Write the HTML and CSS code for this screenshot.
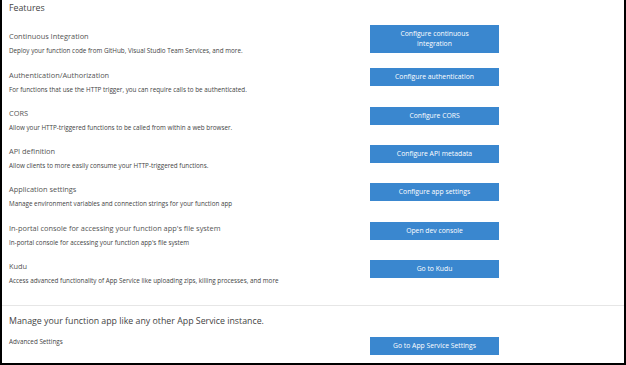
FILE: index.html
```html
<!DOCTYPE html>
<html lang="en">
<head>
    <meta charset="utf-8">
    <title>Function app settings - Features</title>
    <link rel="stylesheet" href="styles.css">
</head>
<body>
    <div class="blade">
        <div class="section-title">Features</div>

        <div class="feature">
            <div class="feature-text">
                <div class="feature-name">Continuous Integration</div>
                <div class="feature-desc">Deploy your function code from GitHub, Visual Studio Team Services, and more.</div>
            </div>
            <button class="action-btn">Configure continuous integration</button>
        </div>

        <div class="feature">
            <div class="feature-text">
                <div class="feature-name">Authentication/Authorization</div>
                <div class="feature-desc">For functions that use the HTTP trigger, you can require calls to be authenticated.</div>
            </div>
            <button class="action-btn">Configure authentication</button>
        </div>

        <div class="feature">
            <div class="feature-text">
                <div class="feature-name">CORS</div>
                <div class="feature-desc">Allow your HTTP-triggered functions to be called from within a web browser.</div>
            </div>
            <button class="action-btn">Configure CORS</button>
        </div>

        <div class="feature">
            <div class="feature-text">
                <div class="feature-name">API definition</div>
                <div class="feature-desc">Allow clients to more easily consume your HTTP-triggered functions.</div>
            </div>
            <button class="action-btn">Configure API metadata</button>
        </div>

        <div class="feature">
            <div class="feature-text">
                <div class="feature-name">Application settings</div>
                <div class="feature-desc">Manage environment variables and connection strings for your function app</div>
            </div>
            <button class="action-btn">Configure app settings</button>
        </div>

        <div class="feature">
            <div class="feature-text">
                <div class="feature-name">In-portal console for accessing your function app's file system</div>
                <div class="feature-desc">In-portal console for accessing your function app's file system</div>
            </div>
            <button class="action-btn">Open dev console</button>
        </div>

        <div class="feature">
            <div class="feature-text">
                <div class="feature-name">Kudu</div>
                <div class="feature-desc">Access advanced functionality of App Service like uploading zips, killing processes, and more</div>
            </div>
            <button class="action-btn">Go to Kudu</button>
        </div>

        <div class="divider"></div>

        <div class="manage">
            <div class="manage-title">Manage your function app like any other App Service instance.</div>
            <div class="advanced">
                <div class="advanced-label">Advanced Settings</div>
                <button class="action-btn">Go to App Service Settings</button>
            </div>
        </div>
    </div>
</body>
</html>
```

FILE: styles.css
```css
body {
    margin: 0;
    font-family: "Open Sans", "Noto Sans", sans-serif;
    background: #fff;
}
.blade {
    box-sizing: border-box;
    width: 626px;
    height: 365px;
    border: 2px solid #000;
    border-top: none;
    overflow: hidden;
}
.section-title {
    height: 20px;
    line-height: 16px;
    padding-left: 7px;
    font-size: 8.8px;
    color: #444;
}
.feature {
    display: flex;
    align-items: center;
    height: 38.3px;
    padding-left: 7px;
}
.feature-text {
    width: 361px;
    padding-top: 9.3px;
}
.feature-name {
    font-size: 7.4px;
    line-height: 14px;
    color: #555;
    white-space: nowrap;
}
.feature-desc {
    font-size: 6.3px;
    line-height: 15px;
    color: #444;
    white-space: nowrap;
}
.action-btn {
    width: 129px;
    min-height: 18px;
    padding: 4px 18px;
    border: none;
    border-radius: 0;
    background: #3a87cf;
    color: #fff;
    font-family: "Open Sans", "Noto Sans", sans-serif;
    font-size: 6.8px;
    line-height: 10px;
    cursor: pointer;
}
.divider {
    margin-top: 17px;
    height: 1px;
    background: #e6e6e6;
}
.manage {
    padding: 8px 0 0 7px;
}
.manage-title {
    font-size: 8.8px;
    line-height: 14px;
    color: #444;
}
.advanced {
    display: flex;
    align-items: flex-start;
    margin-top: 9px;
}
.advanced-label {
    width: 361px;
    font-size: 6.3px;
    line-height: 10px;
    color: #444;
}
```
